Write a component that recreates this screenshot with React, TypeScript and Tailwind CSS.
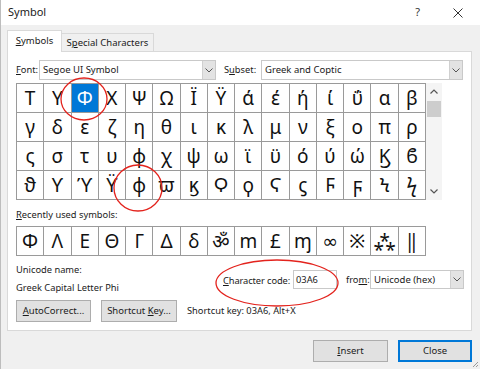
import React from "react";

const gridRows = [
  "ΤΥΦΧΨΩΪΫάέήίΰαβ",
  "γδεζηθικλμνξοπρ",
  "ςστυφχψωϊϋόύώϏϐ",
  "ϑϒϓϔϕϖϗϘϙϚϛϜϝϞϟ",
];
const recent = ["Φ", "Λ", "Ε", "Θ", "Γ", "Δ", "δ", "ॐ", "m", "£", "ɱ", "∞", "※", "⁂", "‖"];

const symFont = { fontFamily: '"Noto Sans", "DejaVu Sans", "Noto Sans CJK SC", sans-serif' };

function Chevron() {
  return (
    <svg width="8" height="5" viewBox="0 0 8 5" fill="none">
      <path d="M0.5 0.5 L4 4 L7.5 0.5" stroke="#555" strokeWidth="1" />
    </svg>
  );
}

function Combo({ text, width }: { text: string; width: string }) {
  return (
    <div className={`${width} h-[20px] flex border border-[#c9c9c9] bg-white`}>
      <div className="flex-1 pl-[3px] flex items-center text-[9.5px] text-[#1a1a1a] leading-none whitespace-nowrap">{text}</div>
      <div className="w-[13px] h-full bg-[#e3e3e3] border-l border-[#d0d0d0] flex items-center justify-center">
        <Chevron />
      </div>
    </div>
  );
}

function Btn({ children, width, focused }: { children: React.ReactNode; width: string; focused?: boolean }) {
  return (
    <div
      className={`${width} h-[22px] flex items-center justify-center text-[9.5px] text-[#1a1a1a] bg-[#e1e1e1] whitespace-nowrap ${
        focused ? "border-2 border-[#0078d7]" : "border border-[#adadad]"
      }`}
    >
      {children}
    </div>
  );
}

export default function App() {
  return (
    <div
      className="w-[480px] h-[369px] bg-[#f0f0f0] relative overflow-hidden flex flex-col border-l border-[#bdbdbd] text-[#1a1a1a]"
      style={{ fontFamily: '"Noto Sans", "Open Sans", sans-serif' }}
    >
      {/* title bar */}
      <div className="h-[25px] bg-white flex items-center pl-[7px] pr-[17px] shrink-0">
        <span className="text-[11px]">Symbol</span>
        <span className="ml-auto text-[11px] text-[#333]">?</span>
        <svg className="ml-[33px]" width="10" height="10" viewBox="0 0 10 10">
          <path d="M0.5 0.5 L9.5 9.5 M9.5 0.5 L0.5 9.5" stroke="#333" strokeWidth="1" />
        </svg>
      </div>

      <div className="flex flex-col pl-[6px] pr-[8px]">
        {/* tabs */}
        <div className="mt-[6px] h-[21px] flex items-end -mb-px relative z-10 text-[9.5px] whitespace-nowrap">
          <div className="w-[55px] h-[22px] bg-white border border-b-0 border-[#d9d9d9] flex items-center justify-center">
            <span>
              <span className="underline">S</span>ymbols
            </span>
          </div>
          <div className="w-[92px] h-[19px] border border-l-0 border-b-0 border-[#d9d9d9] flex items-center justify-center">
            <span>
              S<span className="underline">p</span>ecial Characters
            </span>
          </div>
        </div>

        {/* panel */}
        <div className="h-[280px] bg-white border border-[#d9d9d9] pl-[8px] pt-[8px] flex flex-col text-[9.3px] whitespace-nowrap">
          <div className="h-[20px] flex items-center">
            <span className="w-[23px]">
              <span className="underline">F</span>ont:
            </span>
            <Combo text="Segoe UI Symbol" width="w-[177px]" />
            <span className="ml-[8px] w-[37px]">
              S<span className="underline">u</span>bset:
            </span>
            <Combo text="Greek and Coptic" width="w-[202px]" />
          </div>

          {/* symbol grid */}
          <div className="mt-[3px] flex">
            <div className="w-[410px] h-[117px] grid grid-cols-[repeat(15,minmax(0,1fr))] grid-rows-4 border-l border-t border-[#9a9a9a]" style={symFont}>
              {gridRows.map((row, r) =>
                Array.from(row).map((ch, c) => {
                  const sel = r === 0 && c === 2;
                  return (
                    <div
                      key={`${r}-${c}`}
                      className={`border-r border-b border-[#9a9a9a] flex items-center justify-center text-[19px] leading-none ${
                        sel ? "bg-[#0078d7] text-white" : "text-[#111]"
                      }`}
                    >
                      {ch}
                    </div>
                  );
                })
              )}
            </div>
            <div className="w-[16px] h-[117px] bg-[#f4f4f4] flex flex-col items-center">
              <div className="h-[17px] flex items-center justify-center">
                <svg width="8" height="5" viewBox="0 0 8 5">
                  <path d="M0.5 4.5 L4 1 L7.5 4.5" stroke="#555" strokeWidth="1.2" fill="none" />
                </svg>
              </div>
              <div className="w-[14px] h-[16px] bg-[#cdcdcd] mt-[1px]" />
              <div className="mt-auto h-[17px] flex items-center justify-center">
                <svg width="8" height="5" viewBox="0 0 8 5">
                  <path d="M0.5 0.5 L4 4 L7.5 0.5" stroke="#555" strokeWidth="1.2" fill="none" />
                </svg>
              </div>
            </div>
          </div>

          <div className="mt-[8px] h-[14px] leading-[14px]">
            <span className="underline">R</span>ecently used symbols:
          </div>
          <div className="mt-[4px] w-[410px] h-[30px] grid grid-cols-[repeat(15,minmax(0,1fr))] border-l border-t border-[#9a9a9a]" style={symFont}>
            {recent.map((ch, i) => (
              <div key={i} className="border-r border-b border-[#9a9a9a] flex items-center justify-center text-[19px] leading-none text-[#111]">
                {ch}
              </div>
            ))}
          </div>

          {/* info */}
          <div className="mt-[6px] h-[34px] flex">
            <div className="w-[200px] flex flex-col">
              <div className="h-[16px] leading-[16px]">Unicode name:</div>
              <div className="mt-[2px] h-[16px] leading-[16px]">Greek Capital Letter Phi</div>
            </div>
            <div className="ml-[7px] mt-[8px] h-[19px] flex items-center">
              <span className="w-[70px] mt-[3px] tracking-[-0.1px]">
                <span className="underline">C</span>haracter code:
              </span>
              <div className="w-[44px] h-[19px] border border-[#c9c9c9] bg-white pl-[2px] flex items-center leading-none">03A6</div>
              <span className="ml-[9px] w-[24px]">
                fro<span className="underline">m</span>:
              </span>
              <div className="w-[94px] h-[19px] flex border border-[#c9c9c9] bg-white">
                <div className="flex-1 pl-[3px] flex items-center leading-none text-[9.5px]">Unicode (hex)</div>
                <div className="w-[13px] h-full bg-[#e3e3e3] border-l border-[#d0d0d0] flex items-center justify-center">
                  <Chevron />
                </div>
              </div>
            </div>
          </div>

          <div className="mt-[4px] h-[22px] flex items-center">
            <Btn width="w-[75px]">
              <span>
                <span className="underline">A</span>utoCorrect...
              </span>
            </Btn>
            <div className="ml-[10px]">
              <Btn width="w-[76px]">
                <span>
                  Shortcut <span className="underline">K</span>ey...
                </span>
              </Btn>
            </div>
            <span className="ml-[10px]">Shortcut key: 03A6, Alt+X</span>
          </div>
        </div>

        {/* bottom buttons */}
        <div className="mt-[9px] flex justify-end">
          <Btn width="w-[75px]">
            <span>
              <span className="underline">I</span>nsert
            </span>
          </Btn>
          <div className="ml-[10px]">
            <Btn width="w-[74px]" focused>
              Close
            </Btn>
          </div>
        </div>
      </div>

      {/* resize grip */}
      <svg className="absolute right-[1px] bottom-[1px]" width="8" height="8" viewBox="0 0 8 8">
        <path d="M7 2 L2 7 M7 5 L5 7" stroke="#9a9a9a" strokeWidth="1" />
      </svg>

      {/* red annotation circles */}
      <svg className="absolute left-0 top-0 pointer-events-none" width="480" height="369" viewBox="0 0 480 369">
        <ellipse cx="83" cy="99" rx="23" ry="21" fill="none" stroke="#e3231d" strokeWidth="1.3" />
        <ellipse cx="137" cy="188" rx="24" ry="23" fill="none" stroke="#e3231d" strokeWidth="1.3" />
        <ellipse cx="276" cy="283" rx="61" ry="23" fill="none" stroke="#e3231d" strokeWidth="1.3" />
      </svg>
    </div>
  );
}
